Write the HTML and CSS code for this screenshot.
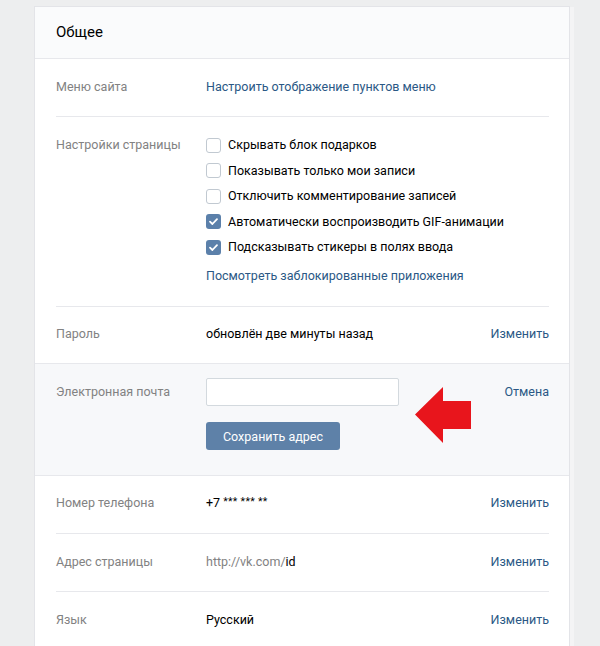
FILE: index.html
```html
<!DOCTYPE html>
<html lang="ru">
<head>
<meta charset="utf-8">
<title>Общее</title>
<link rel="stylesheet" href="styles.css">
</head>
<body>
<div class="card">
  <div class="card-header">Общее</div>

  <div class="row inset">
    <div class="label">Меню сайта</div>
    <div class="value"><a class="link">Настроить отображение пунктов меню</a></div>
    <div class="action"></div>
  </div>

  <div class="row inset settings">
    <div class="label">Настройки страницы</div>
    <div class="value">
      <div class="option"><span class="cb"></span><span>Скрывать блок подарков</span></div>
      <div class="option"><span class="cb"></span><span>Показывать только мои записи</span></div>
      <div class="option"><span class="cb"></span><span>Отключить комментирование записей</span></div>
      <div class="option"><span class="cb checked"><svg viewBox="0 0 15 15" width="15" height="15"><path d="M4 7.6 L6.4 10 L11 5.2" fill="none" stroke="#fff" stroke-width="1.8" stroke-linecap="round" stroke-linejoin="round"/></svg></span><span>Автоматически воспроизводить GIF-анимации</span></div>
      <div class="option"><span class="cb checked"><svg viewBox="0 0 15 15" width="15" height="15"><path d="M4 7.6 L6.4 10 L11 5.2" fill="none" stroke="#fff" stroke-width="1.8" stroke-linecap="round" stroke-linejoin="round"/></svg></span><span>Подсказывать стикеры в полях ввода</span></div>
      <a class="link blocked">Посмотреть заблокированные приложения</a>
    </div>
    <div class="action"></div>
  </div>

  <div class="row inset no-border password">
    <div class="label">Пароль</div>
    <div class="value dark">обновлён две минуты назад</div>
    <div class="action"><a class="link">Изменить</a></div>
  </div>

  <div class="edit-section">
    <div class="label edit-label">Электронная почта</div>
    <div class="value">
      <input class="email-input" type="text">
      <button class="save-btn">Сохранить адрес</button>
    </div>
    <div class="action edit-label"><a class="link">Отмена</a></div>
    <svg class="arrow" viewBox="0 0 56 56" width="56" height="56"><polygon points="0,27.5 28,0 28,14 56,14 56,42 28,42 28,56" fill="#e8151c"/></svg>
  </div>

  <div class="row inset phone">
    <div class="label">Номер телефона</div>
    <div class="value dark">+7 <span class="stars">*** *** **</span></div>
    <div class="action"><a class="link">Изменить</a></div>
  </div>

  <div class="row inset">
    <div class="label">Адрес страницы</div>
    <div class="value"><span class="grey">http://vk.com/</span><span class="dark">id</span></div>
    <div class="action"><a class="link">Изменить</a></div>
  </div>

  <div class="row inset no-border">
    <div class="label">Язык</div>
    <div class="value dark">Русский</div>
    <div class="action"><a class="link">Изменить</a></div>
  </div>
</div>
</body>
</html>
```

FILE: styles.css
```css
html, body {
  margin: 0;
  padding: 0;
}
body {
  background: #edeeef;
  font-family: Roboto, "Open Sans", "DejaVu Sans", sans-serif;
  font-size: 12.5px;
  line-height: 18px;
  color: #000;
  height: 646px;
  overflow: hidden;
}
.card {
  margin: 7px 0 0 35px;
  width: 534px;
  background: #fff;
  box-shadow: 0 0 0 1px #e3e4e8, 5px 0 0 0 #f4f4f5;
}
.card-header {
  height: 51px;
  line-height: 51px;
  padding-left: 21px;
  font-size: 15px;
  color: #000;
  background: #fafbfc;
  border-bottom: 1px solid #e7e8ec;
}
.row {
  display: grid;
  grid-template-columns: 150px 1fr auto;
  padding: 19px 0 20px;
  border-bottom: 1px solid #e7e8ec;
}
.row.inset {
  margin: 0 20px 0 21px;
}
.row.no-border {
  border-bottom: none;
}
.row.password {
  padding: 18px 0 20px;
}
.row.phone {
  padding: 18px 0 21px;
}
.label {
  color: #828282;
}
.value {
  color: #000;
}
.dark { color: #000; }
.grey { color: #828282; }
.stars { font-size: 10.5px; letter-spacing: 0.3px; vertical-align: top; line-height: 16px; }
.link {
  color: #2a5885;
  text-decoration: none;
  cursor: pointer;
}
.action {
  text-align: right;
}
.settings {
  padding-top: 19px;
  padding-bottom: 21px;
}
.option {
  display: flex;
  align-items: center;
  height: 18px;
  margin-bottom: 7.5px;
}
.cb {
  box-sizing: border-box;
  width: 15px;
  height: 15px;
  border: 1px solid #c1c9d1;
  border-radius: 3px;
  background: #fff;
  margin-right: 7px;
  flex: none;
  position: relative;
}
.cb.checked {
  border: none;
  background: #5b80aa;
}
.cb svg {
  display: block;
}
.blocked {
  display: block;
  margin-top: 11px;
}
.edit-section {
  position: relative;
  display: grid;
  grid-template-columns: 150px 1fr auto;
  padding: 14px 20px 25px 21px;
  background: #f7f8fa;
  border-top: 1px solid #e7e8ec;
  border-bottom: 1px solid #e7e8ec;
}
.edit-label {
  margin-top: 5px;
}
.email-input {
  display: block;
  box-sizing: border-box;
  width: 193px;
  height: 28px;
  border: 1px solid #d3d9de;
  border-radius: 2px;
  background: #fff;
  margin: 0;
  padding: 0 8px;
  font: inherit;
}
.save-btn {
  display: block;
  box-sizing: border-box;
  margin-top: 16px;
  width: 134px;
  height: 28px;
  border: none;
  border-radius: 3px;
  background: #5e81a8;
  color: #fff;
  font-family: Roboto, "Open Sans", sans-serif;
  font-size: 12.5px;
  padding: 0;
}
.arrow {
  position: absolute;
  left: 380px;
  top: 23px;
}
```
